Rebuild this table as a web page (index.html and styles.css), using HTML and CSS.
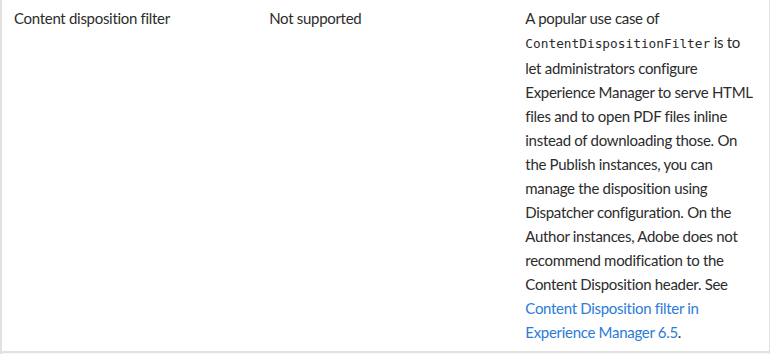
FILE: index.html
```html
<!DOCTYPE html>
<html lang="en">
<head>
    <meta charset="UTF-8">
    <meta name="viewport" content="width=device-width, initial-scale=1.0">
    <title>Feature support</title>
    <link rel="stylesheet" href="styles.css">
</head>
<body>
    <table class="support-table">
        <colgroup>
            <col class="col">
            <col class="col">
            <col class="col">
        </colgroup>
        <tbody>
            <tr>
                <td>Content disposition filter</td>
                <td>Not supported</td>
                <td class="notes">A popular use case of<br>
                    <code>ContentDispositionFilter</code> is to<br>
                    let administrators configure<br>
                    Experience Manager to serve HTML<br>
                    files and to open PDF files inline<br>
                    instead of downloading those. On<br>
                    the Publish instances, you can<br>
                    manage the disposition using<br>
                    Dispatcher configuration. On the<br>
                    Author instances, Adobe does not<br>
                    recommend modification to the<br>
                    Content Disposition header. See<br>
                    <a href="#">Content Disposition filter in<br>Experience Manager 6.5</a>.</td>
            </tr>
            <tr class="striped">
                <td>&nbsp;</td>
                <td>&nbsp;</td>
                <td>&nbsp;</td>
            </tr>
        </tbody>
    </table>
</body>
</html>
```

FILE: styles.css
```css
body {
    margin: 0;
    background: #fff;
    font-family: 'Lato', 'Open Sans', sans-serif;
    font-size: 15px;
    letter-spacing: -0.3px;
    color: #2c2c2c;
}
.support-table {
    border-collapse: collapse;
    width: 770px;
    table-layout: fixed;
    border-left: 2px solid #e1e1e1;
    border-right: 1px solid #e1e1e1;
}
.support-table .col {
    width: 256px;
}
.support-table td {
    box-sizing: border-box;
    vertical-align: top;
    padding: 6px 12px 7px 12px;
    line-height: 24px;
    border-bottom: 2px solid #e1e1e1;
}
/* long lines are broken by hand, keep them from re-wrapping */
.support-table .notes {
    white-space: nowrap;
}
.support-table code {
    font-family: 'DejaVu Sans Mono', monospace;
    font-size: 12.8px;
    letter-spacing: 0;
}
.support-table a {
    color: #2b7bd8;
    text-decoration: none;
}
.striped td {
    background: #f8f8f8;
    border-bottom: none;
}
```
